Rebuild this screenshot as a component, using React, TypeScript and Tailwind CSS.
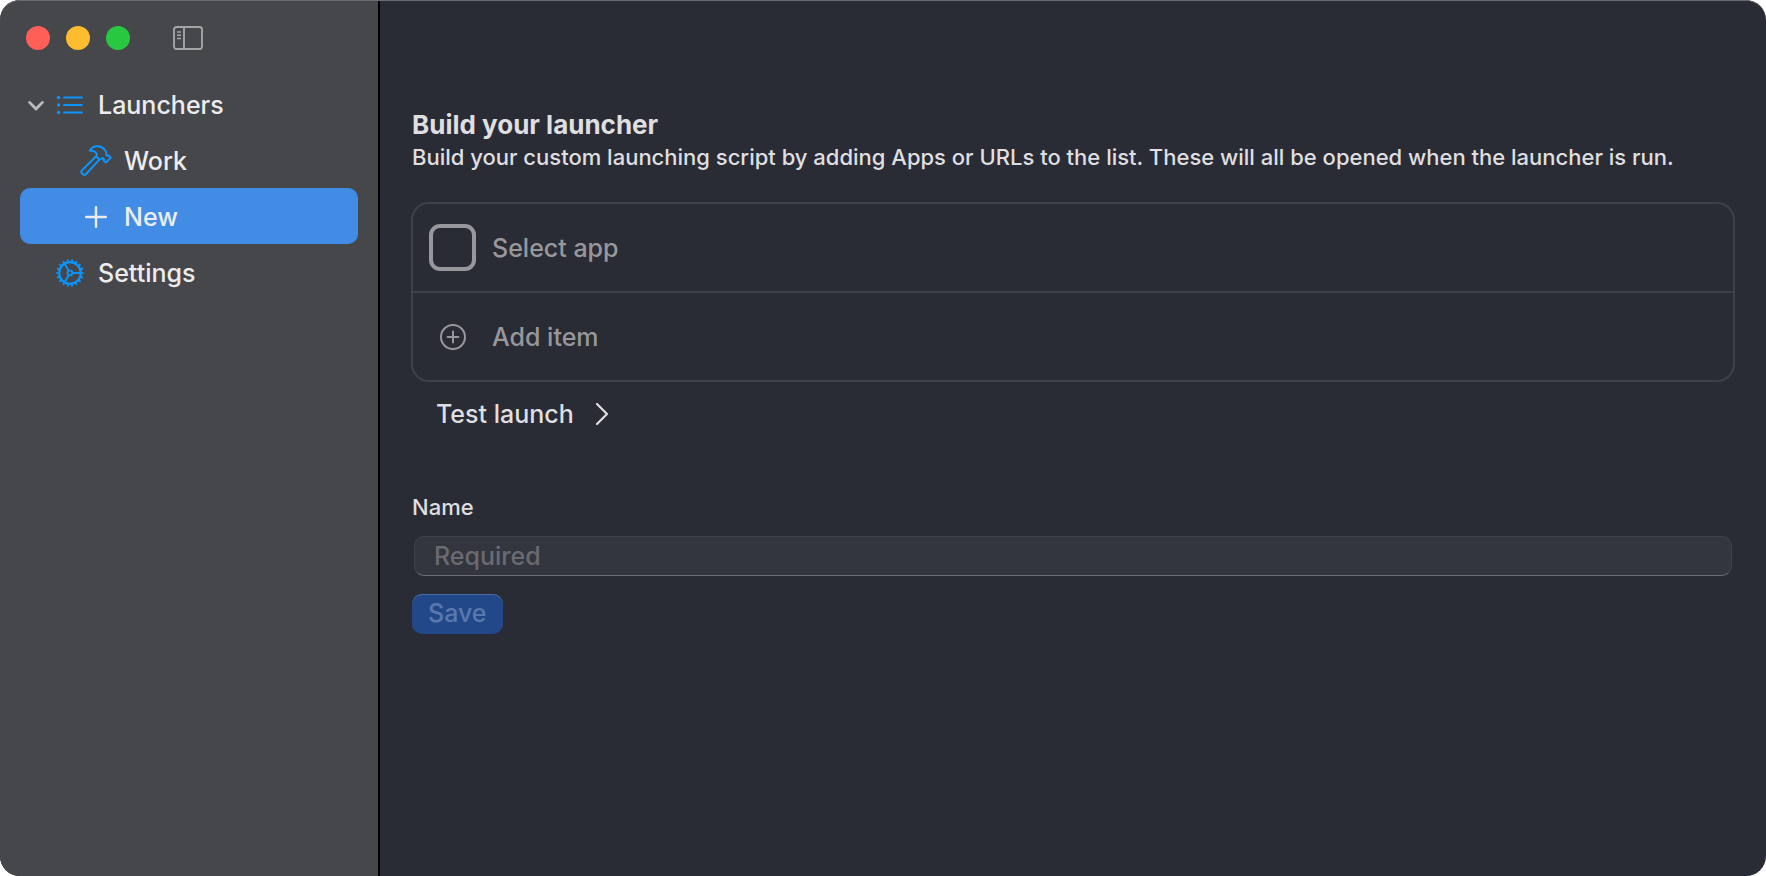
import { useState } from 'react';
import type { ReactNode } from 'react';

function SidebarToggleIcon() {
  return (
    <svg width="30" height="24" viewBox="0 0 30 24" fill="none" stroke="currentColor" strokeWidth="1.9">
      <rect x="1" y="1" width="28" height="22" rx="2.5" />
      <path d="M11 1v22" />
      <path d="M4 6h4M4 9.3h4M4 12.5h4" strokeWidth="1.4" />
    </svg>
  );
}

function ChevronDownIcon() {
  return (
    <svg width="16" height="12" viewBox="0 0 16 12" fill="none" stroke="currentColor" strokeWidth="2.8" strokeLinecap="round" strokeLinejoin="round">
      <path d="M1.6 3.4L8 10l6.4-6.6" />
    </svg>
  );
}

function ListIcon() {
  return (
    <svg width="28" height="20" viewBox="0 0 28 20" fill="none" stroke="currentColor" strokeWidth="2.1" strokeLinecap="round">
      <path d="M8.2 2.5h17.6M8.2 10h17.6M8.2 17.5h17.6" />
      <g fill="currentColor" stroke="none">
        <circle cx="2.6" cy="2.5" r="1.7" />
        <circle cx="2.6" cy="10" r="1.7" />
        <circle cx="2.6" cy="17.5" r="1.7" />
      </g>
    </svg>
  );
}

function HammerIcon() {
  return (
    <svg width="32" height="32" viewBox="0 0 32 32" fill="none" stroke="currentColor" strokeWidth="2" strokeLinejoin="round" strokeLinecap="round">
      <path d="M16.2 11.2L1.9 25.4c-.9.9-.9 1.9 0 2.8l1.1 1.1c.9.9 1.9.9 2.8 0L19.4 14.6" />
      <path d="M16.2 11.2c1.3-2.4.3-5.3-6.4-5.6C12.6.6 20.1-.3 24.4 4.2c1.6 1.7 2.1 3.2 1.9 5.2 0 1.2.9 1.6 2.3 1.1l2.2 2.1-4.9 5-2.2-2.1c.5-1.4 0-2.2-1.4-2.2l-2.9 1.3z" />
    </svg>
  );
}

function PlusIcon() {
  return (
    <svg width="22" height="22" viewBox="0 0 22 22" fill="none" stroke="currentColor" strokeWidth="2.4" strokeLinecap="round">
      <path d="M11 1.2v19.6M1.2 11h19.6" />
    </svg>
  );
}

function GearIcon() {
  return (
    <svg width="28" height="28" viewBox="0 0 28 28" fill="none" stroke="currentColor">
      <circle cx="14" cy="14" r="10.8" strokeWidth="2.2" />
      {/* 18 teeth around the rim */}
      <circle cx="14" cy="14" r="12.7" strokeWidth="2" pathLength="36" strokeDasharray="0.9 1.1" strokeDashoffset="0.45" />
      <circle cx="14" cy="14" r="2.4" strokeWidth="1.9" />
      <path d="M16.4 14h8M12.8 11.9L8.8 5M12.8 16.1L8.8 23" strokeWidth="1.9" />
    </svg>
  );
}

function PlusCircleIcon() {
  return (
    <svg width="26" height="26" viewBox="0 0 26 26" fill="none" stroke="currentColor" strokeWidth="2" strokeLinecap="round">
      <circle cx="13" cy="13" r="12" />
      <path d="M13 7.6v10.8M7.6 13h10.8" />
    </svg>
  );
}

function ChevronRightIcon() {
  return (
    <svg width="14" height="24" viewBox="0 0 14 24" fill="none" stroke="currentColor" strokeWidth="2.2" strokeLinecap="round" strokeLinejoin="round">
      <path d="M2 2l10 10L2 22" />
    </svg>
  );
}

type NavItem = {
  id: string;
  label: string;
  icon: ReactNode;
  nested: boolean;
};

const navItems: NavItem[] = [
  { id: 'work', label: 'Work', icon: <HammerIcon />, nested: true },
  { id: 'new', label: 'New', icon: <PlusIcon />, nested: true },
  { id: 'settings', label: 'Settings', icon: <GearIcon />, nested: false },
];

function Sidebar() {
  const [active, setActive] = useState('new');
  const [open, setOpen] = useState(true);

  const visibleItems = navItems.filter(item => open || !item.nested);

  return (
    <aside className="w-[380px] shrink-0 bg-[#46474a] border-r-2 border-black text-[#ececee]">
      <div className="flex items-center pt-[26px] pl-[26px]">
        <div className="flex gap-4">
          <button aria-label="Close" className="w-6 h-6 rounded-full bg-[#ff5f57]" />
          <button aria-label="Minimize" className="w-6 h-6 rounded-full bg-[#febc2e]" />
          <button aria-label="Zoom" className="w-6 h-6 rounded-full bg-[#28c840]" />
        </div>
        <button aria-label="Toggle sidebar" className="ml-[43px] text-[#a5a5a7]">
          <SidebarToggleIcon />
        </button>
      </div>

      <nav className="mt-[26px] px-5 text-[25px] leading-8 font-medium">
        <button onClick={() => setOpen(!open)} className="w-full h-14 flex items-center pl-2 pt-0.5">
          <span className="text-[#bcbcbe]"><ChevronDownIcon /></span>
          <span className="w-7 ml-3 flex justify-center text-[#0a95ff]"><ListIcon /></span>
          <span className="ml-[14px]">Launchers</span>
        </button>
        {visibleItems.map(item => (
          <button
            key={item.id}
            onClick={() => setActive(item.id)}
            className={`w-full h-14 flex items-center pt-0.5 rounded-[10px] ${item.nested ? 'pl-[60px]' : 'pl-9'} ${
              active === item.id ? 'bg-[#428ce6]' : ''
            }`}
          >
            <span className={`flex justify-center ${item.nested ? 'w-8' : 'w-7'} ${active === item.id ? '' : 'text-[#0a95ff]'}`}>
              {item.icon}
            </span>
            <span className={item.nested ? 'ml-3' : 'ml-[14px]'}>{item.label}</span>
          </button>
        ))}
      </nav>
    </aside>
  );
}

export default function App() {
  const [name, setName] = useState('');

  return (
    <div className="min-h-screen flex bg-white">
      <div className="flex-1 flex relative rounded-[20px] overflow-hidden bg-[#2a2c35] font-['Inter',sans-serif]">
        <Sidebar />
        <main className="flex-1 min-w-0 px-[31px] pt-[109px] text-[#dfdfe0] font-medium">
          <div className="px-px">
            <h1 className="text-[26px] leading-8 font-bold">Build your launcher</h1>
            <p className="text-[22px] leading-8">
              Build your custom launching script by adding Apps or URLs to the list. These will all be opened when the launcher is run.
            </p>
          </div>

          <div className="mt-[29px] border-2 border-[#3f4149] rounded-[18px] divide-y-2 divide-[#3f4149] text-[25px] leading-8 text-[#98989c]">
            <button className="w-full h-[89px] px-4 flex items-center gap-4">
              <span className="w-[47px] h-[47px] rounded-[11px] border-4 border-[#98989c]" />
              <span>Select app</span>
            </button>
            <button className="w-full h-[87px] px-4 flex items-center gap-4">
              <span className="w-[47px] flex justify-center"><PlusCircleIcon /></span>
              <span>Add item</span>
            </button>
          </div>

          <button className="mt-3 ml-[25px] h-10 flex items-center gap-[21px] text-[25px] leading-8">
            <span>Test launch</span>
            <ChevronRightIcon />
          </button>

          <form className="mt-[57px] px-px" onSubmit={e => e.preventDefault()}>
            <label htmlFor="launcher-name" className="block text-[22px] leading-8">Name</label>
            <div className="mt-[13px] px-0.5">
              <input
                id="launcher-name"
                type="text"
                placeholder="Required"
                value={name}
                onChange={e => setName(e.target.value)}
                className="block w-full h-10 px-[19px] rounded-[10px] border border-[#40424a] border-b-[#6b6d73] bg-[#34363f] text-[25px] placeholder:text-[#6a6b70] focus:outline-none"
              />
            </div>
            <button
              type="submit"
              disabled={!name}
              className="mt-[18px] h-10 px-4 pb-0.5 rounded-[10px] bg-[#23488a] shadow-[inset_0_1px_0_#4a6ba5] text-[25px] leading-8 text-[#5878ae]"
            >
              Save
            </button>
          </form>
        </main>
        {/* light edge along the top of the window */}
        <div className="absolute inset-0 rounded-[20px] border-t border-[#6a6c71] pointer-events-none" />
      </div>
    </div>
  );
}
